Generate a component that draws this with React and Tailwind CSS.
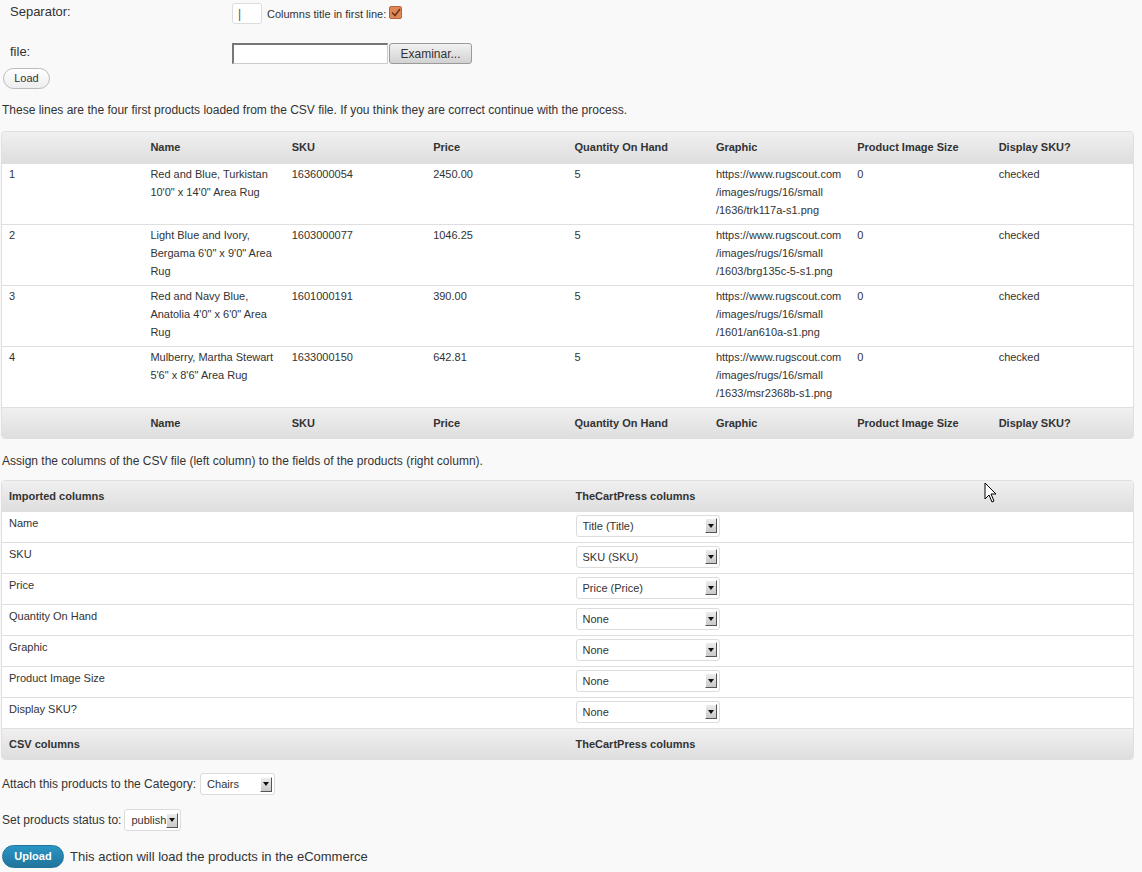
import React from 'react';

const products = [
  {
    id: 1,
    name: ['Red and Blue, Turkistan', '10\'0" x 14\'0" Area Rug'],
    sku: '1636000054',
    price: '2450.00',
    graphic: ['https://www.rugscout.com', '/images/rugs/16/small', '/1636/trk117a-s1.png'],
  },
  {
    id: 2,
    name: ['Light Blue and Ivory,', 'Bergama 6\'0" x 9\'0" Area', 'Rug'],
    sku: '1603000077',
    price: '1046.25',
    graphic: ['https://www.rugscout.com', '/images/rugs/16/small', '/1603/brg135c-5-s1.png'],
  },
  {
    id: 3,
    name: ['Red and Navy Blue,', 'Anatolia 4\'0" x 6\'0" Area', 'Rug'],
    sku: '1601000191',
    price: '390.00',
    graphic: ['https://www.rugscout.com', '/images/rugs/16/small', '/1601/an610a-s1.png'],
  },
  {
    id: 4,
    name: ['Mulberry, Martha Stewart', '5\'6" x 8\'6" Area Rug'],
    sku: '1633000150',
    price: '642.81',
    graphic: ['https://www.rugscout.com', '/images/rugs/16/small', '/1633/msr2368b-s1.png'],
  },
];

const headers = ['', 'Name', 'SKU', 'Price', 'Quantity On Hand', 'Graphic', 'Product Image Size', 'Display SKU?'];

const mapping = [
  ['Name', 'Title (Title)'],
  ['SKU', 'SKU (SKU)'],
  ['Price', 'Price (Price)'],
  ['Quantity On Hand', 'None'],
  ['Graphic', 'None'],
  ['Product Image Size', 'None'],
  ['Display SKU?', 'None'],
];

const Lines = ({ lines }) => (
  <>
    {lines.map((l, i) => (
      <div key={i} className="whitespace-nowrap">{l}</div>
    ))}
  </>
);

const SelectArrow = () => (
  <span className="flex h-[15px] w-[12px] shrink-0 items-center justify-center border border-t-white border-l-white border-r-[#555] border-b-[#555] bg-linear-to-b from-[#ececec] to-[#c9c9c9]">
    <svg width="6" height="4" viewBox="0 0 6 4"><path d="M0 0h6L3 4z" fill="#111" /></svg>
  </span>
);

const FakeSelect = ({ value, className }) => (
  <div className={`flex h-[22px] items-center rounded-[3px] border border-[#dcdcdc] bg-white pl-[6px] pr-[2px] text-[11px] text-[#333] ${className}`}>
    <span className="flex-1 overflow-hidden whitespace-nowrap">{value}</span>
    <SelectArrow />
  </div>
);

const headCell = 'h-[31px] px-[7px] text-left align-middle text-[11px] font-bold text-[#333]';
const bodyCell = 'px-[7px] pt-[1px] pb-[5px] align-top';

export default function App() {
  return (
    <div className="relative min-h-[872px] bg-[#f9f9f9] font-['Liberation_Sans',Arial,sans-serif] text-[#333]">
      {/* upload form */}
      <div className="flex items-start pt-[3px]">
        <div className="w-[232px] pl-[10px] pt-[1px] text-[13px] leading-[16px]">Separator:</div>
        <div className="flex h-[21px] w-[30px] items-center rounded-[3px] border border-[#dcdcdc] bg-white pl-[5px] text-[12px] text-[#555]">|</div>
        <span className="ml-[5px] mt-[4px] text-[11px] leading-[14px]">Columns title in first line:</span>
        <span className="ml-[3px] mt-[3px] flex h-[13px] w-[13px] items-center justify-center rounded-[2px] border border-[#b8643a] bg-[#e0875a]">
          <svg width="10" height="9" viewBox="0 0 10 9"><path d="M1 4.5l3 3L9 1" fill="none" stroke="#6b3418" strokeWidth="1.6" /></svg>
        </span>
      </div>
      <div className="mt-[19px] flex items-start">
        <div className="w-[232px] pl-[10px] pt-[1px] text-[13px] leading-[16px]">file:</div>
        <div className="h-[21px] w-[156px] border border-[#ccc] border-t-[2px] border-l-[2px] border-t-[#777] border-l-[#777] bg-white" />
        <div className="ml-[1px] flex h-[21px] w-[83px] items-center justify-center rounded-[3px] border border-[#9a9a9a] bg-linear-to-b from-[#f2f2f2] to-[#d2d2d2] text-[12px] text-[#333]">Examinar...</div>
      </div>
      <div className="ml-[3px] mt-[4px] flex h-[21px] w-[47px] items-center justify-center rounded-full border border-[#bbb] bg-linear-to-b from-white to-[#ededed] text-[11px]">Load</div>

      <p className="ml-[2px] mt-[12px] text-[12px] leading-[18px]">
        These lines are the four first products loaded from the CSV file. If you think they are correct continue with the process.
      </p>

      {/* preview table */}
      <div className="ml-[1px] mt-[12px] w-[1133px] overflow-hidden rounded-[4px] border border-[#dfdfdf] bg-white">
        <table className="w-full table-fixed border-collapse">
          <thead>
            <tr className="bg-linear-to-b from-[#f0f0f0] to-[#dedede]">
              {headers.map((h, i) => (
                <th key={i} className={headCell}>{h}</th>
              ))}
            </tr>
          </thead>
          <tbody className="text-[11px] leading-[18px]">
            {products.map((p) => (
              <tr key={p.id} className="border-t border-[#dfdfdf]">
                <td className={`h-[61px] ${bodyCell}`}>{p.id}</td>
                <td className={bodyCell}><Lines lines={p.name} /></td>
                <td className={bodyCell}>{p.sku}</td>
                <td className={bodyCell}>{p.price}</td>
                <td className={bodyCell}>5</td>
                <td className={bodyCell}><Lines lines={p.graphic} /></td>
                <td className={bodyCell}>0</td>
                <td className={bodyCell}>checked</td>
              </tr>
            ))}
          </tbody>
          <tfoot>
            <tr className="border-t border-[#dfdfdf] bg-linear-to-b from-[#f0f0f0] to-[#dedede]">
              {headers.map((h, i) => (
                <th key={i} className={headCell}>{h}</th>
              ))}
            </tr>
          </tfoot>
        </table>
      </div>

      <p className="ml-[2px] mt-[13px] text-[12px] leading-[18px]">
        Assign the columns of the CSV file (left column) to the fields of the products (right column).
      </p>

      {/* column mapping table */}
      <div className="ml-[1px] mt-[10px] w-[1133px] overflow-hidden rounded-[4px] border border-[#dfdfdf] bg-white">
        <table className="w-full table-fixed border-collapse">
          <thead>
            <tr className="bg-linear-to-b from-[#f0f0f0] to-[#dedede]">
              <th className="h-[30px] px-[7px] text-left align-middle text-[11px] font-bold text-[#333]">Imported columns</th>
              <th className="h-[30px] pl-[8px] text-left align-middle text-[11px] font-bold text-[#333]">TheCartPress columns</th>
            </tr>
          </thead>
          <tbody className="text-[11px] leading-[18px]">
            {mapping.map(([col, field]) => (
              <tr key={col} className="border-t border-[#dfdfdf]">
                <td className="h-[31px] px-[7px] pt-[2px] align-top">{col}</td>
                <td className="pl-[8px] pt-[3px] pb-[5px] align-top">
                  <FakeSelect value={field} className="w-[144px]" />
                </td>
              </tr>
            ))}
          </tbody>
          <tfoot>
            <tr className="border-t border-[#dfdfdf] bg-linear-to-b from-[#f0f0f0] to-[#dedede]">
              <th className={headCell}>CSV columns</th>
              <th className="h-[31px] pl-[8px] text-left align-middle text-[11px] font-bold text-[#333]">TheCartPress columns</th>
            </tr>
          </tfoot>
        </table>
      </div>

      <div className="ml-[2px] mt-[13px] flex items-center text-[12px]">
        <span>Attach this products to the Category:</span>
        <FakeSelect value="Chairs" className="ml-[4px] w-[75px]" />
      </div>
      <div className="ml-[2px] mt-[14px] flex items-center text-[12px]">
        <span>Set products status to:</span>
        <FakeSelect value="publish" className="ml-[3px] w-[57px] pl-[5px]" />
      </div>
      <div className="ml-[2px] mt-[14px] flex items-center pb-[3px]">
        <div className="flex h-[23px] w-[62px] items-center justify-center rounded-full border border-[#21759b] bg-linear-to-b from-[#2a95c5] to-[#21759b] text-[11px] font-bold text-white">Upload</div>
        <span className="ml-[6px] text-[13px]">This action will load the products in the eCommerce</span>
      </div>

      {/* mouse pointer */}
      <svg className="absolute left-[984px] top-[482px]" width="13" height="21" viewBox="0 0 13 21">
        <path d="M1 1v16l4-4 3 7 2-1-3-7h5z" fill="#fff" stroke="#000" strokeWidth="1" />
      </svg>
    </div>
  );
}
